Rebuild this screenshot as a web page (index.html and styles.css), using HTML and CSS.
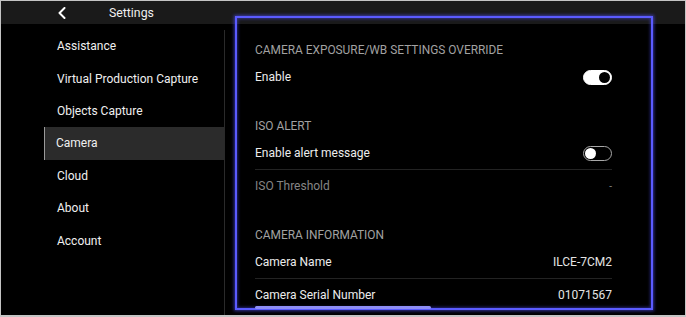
FILE: index.html
```html
<!DOCTYPE html>
<html lang="en">
<head>
    <meta charset="UTF-8">
    <meta name="viewport" content="width=device-width, initial-scale=1.0">
    <title>Settings</title>
    <link rel="stylesheet" href="styles.css">
</head>
<body>
    <div class="frame">
        <div class="topbar">
            <svg class="back" width="8" height="12" viewBox="0 0 8 12">
                <polyline points="6.5,1 1.5,6 6.5,11" fill="none" stroke="#fff" stroke-width="2" stroke-linecap="round" stroke-linejoin="round"/>
            </svg>
            <span class="title">Settings</span>
        </div>

        <div class="main">
            <div class="sidebar">
                <div class="nav-item">Assistance</div>
                <div class="nav-item">Virtual Production Capture</div>
                <div class="nav-item">Objects Capture</div>
                <div class="nav-item active">Camera</div>
                <div class="nav-item">Cloud</div>
                <div class="nav-item">About</div>
                <div class="nav-item">Account</div>
            </div>
            <div class="divider"></div>

            <div class="content">
                <div class="section">
                    <div class="section-title">Camera Exposure/WB Settings Override</div>
                    <div class="row">
                        <span class="label">Enable</span>
                        <span class="toggle on"><span class="knob"></span></span>
                    </div>
                </div>

                <div class="section">
                    <div class="section-title">ISO Alert</div>
                    <div class="row">
                        <span class="label">Enable alert message</span>
                        <span class="toggle"><span class="knob"></span></span>
                    </div>
                    <div class="row disabled">
                        <span class="label">ISO Threshold</span>
                        <span class="value">-</span>
                    </div>
                </div>

                <div class="section">
                    <div class="section-title">Camera Information</div>
                    <div class="row">
                        <span class="label">Camera Name</span>
                        <span class="value">ILCE-7CM2</span>
                    </div>
                    <div class="row">
                        <span class="label">Camera Serial Number</span>
                        <span class="value">01071567</span>
                    </div>
                </div>
            </div>
        </div>

        <!-- focus highlight over the detail pane -->
        <div class="focus-ring"></div>
        <div class="scroll-indicator"></div>
    </div>
</body>
</html>
```

FILE: styles.css
```css
* {
    box-sizing: border-box;
}

body {
    margin: 0;
    padding: 0;
    background: #000;
    font-family: Roboto, "Liberation Sans", sans-serif;
    color: #ececec;
}

.frame {
    position: relative;
    width: 686px;
    height: 317px;
    border: 1px solid #c4c4c4;
    border-bottom-width: 2px;
    background: #000;
    overflow: hidden;
}

.topbar {
    height: 23px;
    background: #1a1a1a;
    display: flex;
    align-items: center;
}

.back {
    margin-left: 57px;
}

.title {
    margin-left: 43px;
    font-size: 12.3px;
    color: #f0f0f0;
}

.main {
    display: flex;
    height: 291px;
}

.sidebar {
    width: 223px;
    padding-top: 6px;
    padding-left: 43px;
}

.nav-item {
    height: 32.4px;
    display: flex;
    align-items: center;
    padding-left: 12px;
    font-size: 12px;
    color: #f0f0f0;
    border-left: 1px solid transparent;
}

.nav-item.active {
    background: #2b2b2b;
    border-left-color: #9a9a9a;
    padding-left: 11px;
}

.divider {
    width: 1px;
    margin-top: 6px;
    background: #2a2a2a;
}

.content {
    flex: 1;
    padding: 15px 73px 0 30px;
}

.section {
    margin-bottom: 22px;
}

.section-title {
    height: 22px;
    display: flex;
    align-items: center;
    font-size: 11.9px;
    text-transform: uppercase;
    color: #a2a2a2;
}

.row {
    height: 32px;
    display: flex;
    align-items: center;
    justify-content: space-between;
    font-size: 12px;
}

.row + .row {
    border-top: 1px solid #232323;
    height: 33px;
}

.row.disabled .label {
    color: #858585;
}

.row.disabled .value {
    color: #858585;
    font-size: 10px;
}

.value {
    color: #e4e4e4;
}

.toggle {
    width: 29px;
    height: 15px;
    border-radius: 8px;
    border: 1px solid #a8a8a8;
    background: #000;
    display: flex;
    align-items: center;
    padding: 0 1px;
}

.toggle .knob {
    width: 11px;
    height: 11px;
    border-radius: 50%;
    background: #fff;
}

.toggle.on {
    background: #fff;
    border-color: #fff;
    justify-content: flex-end;
}

.toggle.on .knob {
    background: #000;
}

.focus-ring {
    position: absolute;
    left: 234px;
    top: 15px;
    width: 418px;
    height: 294px;
    border: 2px solid #5b5bff;
    box-shadow: 0 0 3px 1px rgba(80, 80, 255, 0.6), inset 0 0 3px 1px rgba(80, 80, 255, 0.45);
    pointer-events: none;
}

.scroll-indicator {
    position: absolute;
    left: 254px;
    top: 305px;
    width: 176px;
    height: 3px;
    border-radius: 2px;
    background: #8e8ef5;
}
```
